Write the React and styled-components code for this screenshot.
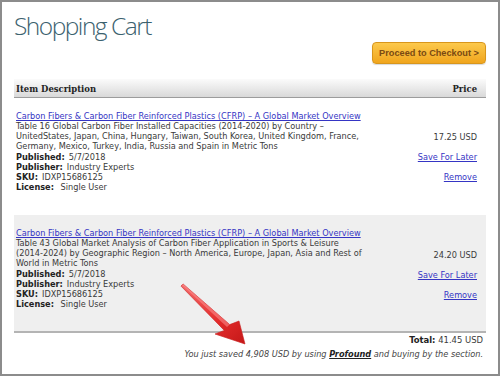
import styled, { createGlobalStyle } from 'styled-components';

const GlobalStyle = createGlobalStyle`
body {
    margin: 0;
    background: #fff;
}
`;

const Frame = styled.div`
position: relative;
width: 500px;
height: 376px;
box-sizing: border-box;
border: 2px solid #8c8c8c;
padding: 0 12px;
background: #fff;
font-family: "DejaVu Sans Condensed", "DejaVu Sans", sans-serif;
font-size: 9.1px;
color: #3a3a3a;
overflow: hidden;
`;
const TopBar = styled.div`
display: flex;
justify-content: space-between;
align-items: flex-start;
`;
const Title = styled.h1`
margin: 9px 0 0 0;
font-family: "Open Sans", sans-serif;
font-weight: 300;
font-size: 24.5px;
line-height: 30px;
letter-spacing: -1.5px;
color: #3b616e;
`;
const CheckoutButton = styled.button`
margin-top: 40px;
width: 114px;
height: 22px;
padding: 0;
white-space: nowrap;
border: 1px solid #d8961c;
border-radius: 4px;
background: linear-gradient(#fcc94c, #f0a51d);
box-shadow: 0 1px 1px rgba(0, 0, 0, 0.15);
color: #7a4a12;
font-family: "Liberation Sans", Arial, sans-serif;
font-weight: bold;
font-size: 9.2px;
cursor: pointer;
`;
const HeaderRow = styled.div`
margin-top: 15px;
height: 19px;
box-sizing: border-box;
display: flex;
justify-content: space-between;
align-items: center;
padding: 0 9px 0 2px;
background: linear-gradient(#fbfbfb, #d9d9d9);
border-bottom: 1px solid #9c9c9c;
font-family: "DejaVu Serif Condensed", "DejaVu Serif", serif;
font-weight: bold;
font-size: 9.4px;
color: #222;
`;
const ItemRow = styled.div`
display: flex;
justify-content: space-between;
padding: 13px 9px ${p => p.$last ? '22px' : '23px'} 2px;
background: ${p => p.$shaded ? '#efefef' : '#fff'};
border-bottom: ${p => p.$last ? '2px solid #b4b4b4' : 'none'};
line-height: 10px;
`;
const Description = styled.div`
width: 350px;
`;
const TitleLink = styled.a`
color: #3535c4;
text-decoration: underline;
`;
const Meta = styled.div`
margin-top: 1px;
`;
const MetaLine = styled.div`
b {
    color: #222;
    margin-right: 4px;
}
`;
const Actions = styled.div`
display: flex;
flex-direction: column;
align-items: flex-end;
gap: 10px;
padding-top: ${p => p.$offset}px;
`;
const ActionLink = styled.a`
color: #3535c4;
text-decoration: underline;
`;
const Summary = styled.div`
padding: 0 3px 0 0;
text-align: right;
line-height: 14px;
`;
const Total = styled.div`
font-size: 9.4px;
b {
    color: #222;
}
`;
const Saved = styled.div`
font-style: italic;
color: #444;
b {
    color: #222;
    text-decoration: underline;
}
`;
const Arrow = styled.svg`
position: absolute;
left: 168px;
top: 273px;
`;

const items = [
    {
        desc: 'Table 16 Global Carbon Fiber Installed Capacities (2014-2020) by Country – UnitedStates, Japan, China, Hungary, Taiwan, South Korea, United Kingdom, France, Germany, Mexico, Turkey, India, Russia and Spain in Metric Tons',
        price: '17.25 USD',
        offset: 21,
    },
    {
        desc: 'Table 43 Global Market Analysis of Carbon Fiber Application in Sports & Leisure (2014-2024) by Geographic Region – North America, Europe, Japan, Asia and Rest of World in Metric Tons',
        price: '24.20 USD',
        offset: 22,
    },
];

export default function App() {
    return (
        <>
            <GlobalStyle />
            <Frame>
                <TopBar>
                    <Title>Shopping Cart</Title>
                    <CheckoutButton>Proceed to Checkout &gt;</CheckoutButton>
                </TopBar>
                <HeaderRow>
                    <span>Item Description</span>
                    <span>Price</span>
                </HeaderRow>
                {items.map((item, i) => (
                    <ItemRow key={i} $shaded={i % 2 === 1} $last={i === items.length - 1}>
                        <Description>
                            <TitleLink href="#">Carbon Fibers &amp; Carbon Fiber Reinforced Plastics (CFRP) – A Global Market Overview</TitleLink>
                            <div>{item.desc}</div>
                            <Meta>
                                <MetaLine><b>Published:</b>5/7/2018</MetaLine>
                                <MetaLine><b>Publisher:</b>Industry Experts</MetaLine>
                                <MetaLine><b>SKU:</b>IDXP15686125</MetaLine>
                                <MetaLine><b>License:</b>&nbsp;Single User</MetaLine>
                            </Meta>
                        </Description>
                        <Actions $offset={item.offset}>
                            <span>{item.price}</span>
                            <ActionLink href="#">Save For Later</ActionLink>
                            <ActionLink href="#">Remove</ActionLink>
                        </Actions>
                    </ItemRow>
                ))}
                <Summary>
                    <Total><b>Total:</b> 41.45 USD</Total>
                    <Saved>You just saved 4,908 USD by using <b>Profound</b> and buying by the section.</Saved>
                </Summary>
                <Arrow width="84" height="76" viewBox="0 0 84 76">
                    <defs>
                        <linearGradient id="arrowFill" x1="0" y1="0" x2="1" y2="1">
                            <stop offset="0" stopColor="#f46a6a" />
                            <stop offset="0.6" stopColor="#e42c2c" />
                            <stop offset="1" stopColor="#c41818" />
                        </linearGradient>
                    </defs>
                    <polygon
                        points="13,8.9 59.7,49.6 69,46 75,69 45,59 54.3,55.4 11,11.1"
                        fill="url(#arrowFill)"
                        stroke="#c81d1d"
                        strokeWidth="0.6"
                        strokeLinejoin="round"
                    />
                    <polygon points="13,8.9 59.7,49.6 57,52 12,10" fill="#ff9a9a" opacity="0.5" />
                </Arrow>
            </Frame>
        </>
    );
}
